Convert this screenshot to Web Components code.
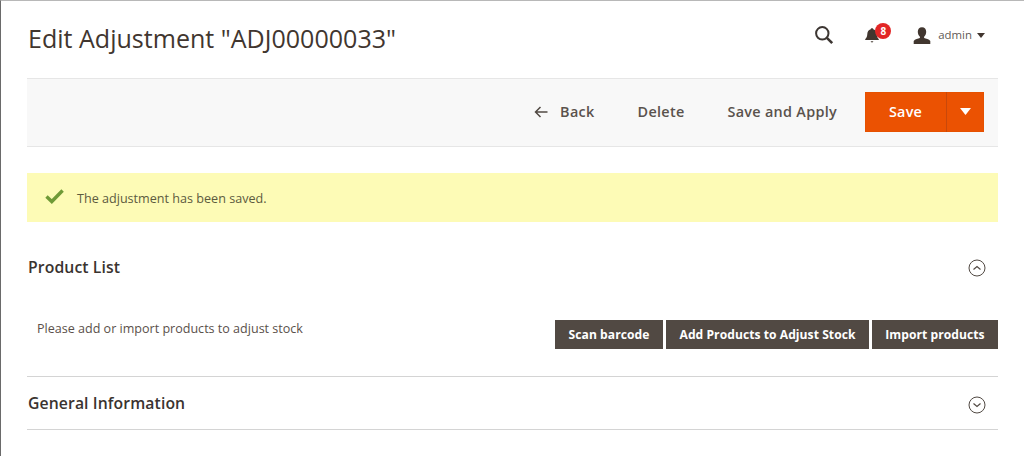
<!DOCTYPE html>
<html><head><meta charset="utf-8">
<style>
html,body{margin:0;padding:0;background:#fff;height:456px;overflow:hidden}
body{font-family:"Open Sans",sans-serif;color:#41362f}
</style></head><body>
<template id="t-page"><style>
:host{display:block;height:455px;border-top:1px solid #b8b8b8;border-left:1px solid #6a6a6a;padding:0 26px 0 26px;box-sizing:content-box;width:971px;overflow:hidden}
</style><slot></slot></template>
<template id="t-header"><style>
:host{display:flex;align-items:center;height:77px;justify-content:space-between}
h1{margin:0 0 4px 1px;font-size:25.05px;font-weight:400;color:#41362f;line-height:32px}
.r{display:flex;align-items:center;margin-right:13px;margin-bottom:9px}
svg{display:block}
.bell{position:relative;margin-left:31px;width:16px;height:18px}
.badge{position:absolute;left:10px;top:-3px;width:16px;height:16px;border-radius:50%;background:#e22626;color:#fff;font:700 10px/16px "Open Sans",sans-serif;text-align:center}
.user{margin-left:32px}
.name{font-size:11.4px;color:#5f5a56;margin-left:7px;line-height:16px}
.caret{margin-left:5px}
</style><h1><slot></slot></h1><div class="r">
<svg width="20" height="20" viewBox="0 0 20 20" fill="none" stroke="#3c3632"><circle cx="8.3" cy="8.3" r="6.2" stroke-width="2"/><path d="M12.9 12.9l5.3 5.3" stroke-width="2.6"/></svg>
<div class="bell"><svg width="14" height="17" viewBox="0 0 14 17" fill="#41362f" style="margin-top:1px"><path d="M7 1.2c.8 0 1.2.4 1.3 1C10.600 2.800 11.600 4.700 11.700 7c.1 2.300.6 3.700 2.100 5.200v.8H.2v-.8C1.700 10.700 2.200 9.300 2.300 7 2.400 4.700 3.400 2.800 5.700 2.200 5.800 1.600 6.200 1.200 7 1.200z"/><path d="M5.500 14.200h3L7 15.800z"/></svg><span class="badge">8</span></div>
<svg class="user" width="18" height="17" viewBox="0 0 18 17" fill="#41362f"><path d="M9 .3c2.700 0 4.200 1.800 4.200 4.500 0 2.100-.9 4-2.100 5v1.300c1.800.7 5 1.300 6.200 2.800V17H.7v-3.100c1.200-1.500 4.400-2.100 6.200-2.800V9.800c-1.200-1-2.100-2.900-2.100-5C4.800 2.100 6.300.3 9 .3z"/></svg>
<span class="name">admin</span>
<svg class="caret" width="8" height="5" viewBox="0 0 8 5" fill="#41362f"><path d="M0 0h8L4 5z"/></svg>
</div></template>
<template id="t-toolbar"><style>
:host{display:flex;align-items:center;justify-content:flex-end;height:65px;padding-bottom:2px;background:#f8f8f8;border-top:1px solid #e6e6e6;border-bottom:1px solid #e6e6e6;padding-right:14px;gap:43px}
</style><slot></slot></template>
<template id="t-action"><style>
:host{display:inline-flex;align-items:center;font-size:14.4px;font-weight:600;letter-spacing:.3px;color:#5a524c;line-height:20px;gap:12px}
svg{display:block}
</style><slot name="icon"></slot><slot></slot></template>
<template id="t-split"><style>
:host{display:flex;height:40px;background:#eb5202;color:#fff;font-size:14.4px;font-weight:600;letter-spacing:.2px;line-height:40px;margin-left:-15px;box-shadow:inset 0 0 0 1px #e65100}
.m{width:81px;text-align:center;border-right:1px solid #c9480a;box-sizing:content-box}
.c{flex:1;display:flex;align-items:center;justify-content:center;width:37px}
svg{display:block}
</style><div class="m"><slot></slot></div><div class="c"><svg width="11" height="7" viewBox="0 0 11 7" fill="#fff"><path d="M0 0h11L5.500 7z"/></svg></div></template>
<template id="t-notice"><style>
:host{display:flex;align-items:center;height:49px;margin-top:26px;background:#fdfbb6;padding-left:18px;font-size:12.6px;color:#5c5a3e;gap:13px}
svg{display:block;margin-top:-3px}
span{margin-top:1px}
</style><svg width="19" height="15" viewBox="0 0 19 15" fill="none" stroke="#6f9a37" stroke-width="3.400"><path d="M1.500 7.500l5.300 5 10.800-11"/></svg><span><slot></slot></span></template>
<template id="t-section"><style>
:host{display:block}
.h{display:flex;justify-content:space-between;align-items:center;height:var(--h,90px)}
h2{margin:0 0 0 1px;font-size:15.75px;font-weight:600;color:#3a3330;letter-spacing:.1px;line-height:22px}
</style><div class="h"><h2><slot name="title"></slot></h2><slot name="icon"></slot></div><slot></slot></template>
<template id="t-chevron"><style>
:host{display:block;margin:2px 12px 0 0;width:18px;height:18px}
:host([data-down]){margin-top:4px}
svg{display:block}
</style><svg width="18" height="18" viewBox="0 0 18 18" fill="none" stroke="#514943"><circle cx="9" cy="9" r="8"/><path id="p" d="M5.500 10.500L9 7.500l3.500 3" stroke-width="1.200"/></svg></template>
<template id="t-row"><style>
:host{display:flex;justify-content:space-between;align-items:flex-start;height:56px;border-bottom:1px solid #d4d4d4;margin-top:8px}
.m{font-size:12.55px;color:#5a504a;margin:0 0 0 10px;line-height:18px}
.b{display:flex;gap:3px}
</style><p class="m"><slot name="msg"></slot></p><div class="b"><slot></slot></div></template>
<template id="t-btn"><style>
:host{display:block;height:29px;background:#514943;color:#fff;font-size:12.1px;font-weight:700;letter-spacing:.05px;line-height:29px;text-align:center;box-sizing:border-box}
</style><slot></slot></template>
<my-page>
<my-header>Edit Adjustment "ADJ00000033"</my-header>
<my-toolbar>
<my-action><svg slot="icon" width="14" height="12" viewBox="0 0 14 12" fill="none" stroke="#514943" stroke-width="1.500"><path d="M13.500 6H1.500M6.500 1L1.500 6l5 5"/></svg>Back</my-action>
<my-action>Delete</my-action>
<my-action>Save and Apply</my-action>
<my-split>Save</my-split>
</my-toolbar>
<my-notice>The adjustment has been saved.</my-notice>
<my-section>
<span slot="title">Product List</span><my-chevron slot="icon"></my-chevron>
<my-row><span slot="msg">Please add or import products to adjust stock</span>
<my-btn style="width:108px">Scan barcode</my-btn><my-btn style="width:203px">Add Products to Adjust Stock</my-btn><my-btn style="width:126px">Import products</my-btn></my-row>
</my-section>
<my-section style="--h:52px;border-bottom:1px solid #d4d4d4">
<span slot="title">General Information</span><my-chevron slot="icon" data-down></my-chevron>
</my-section>
</my-page>
<script>
const names={'my-page':'t-page','my-header':'t-header','my-toolbar':'t-toolbar','my-action':'t-action','my-split':'t-split','my-notice':'t-notice','my-section':'t-section','my-chevron':'t-chevron','my-row':'t-row','my-btn':'t-btn'};
for(const [n,t] of Object.entries(names)){
customElements.define(n,class extends HTMLElement{
constructor(){super();const s=this.attachShadow({mode:'open'});s.appendChild(document.getElementById(t).content.cloneNode(true));}
connectedCallback(){if(this.hasAttribute('data-down')){const p=this.shadowRoot.getElementById('p');p.setAttribute('d','M5.500 7.500L9 10.500l3.500-3');}}
});
}
</script>
</body></html>
